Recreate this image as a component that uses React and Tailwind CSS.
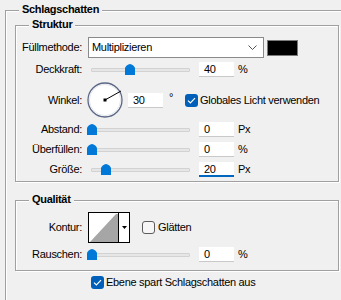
import React from 'react'

function GroupTitle({ children, className }) {
  return (
    <div className={`-mt-[8px] w-fit bg-[#f0f0f0] px-[3px] font-bold leading-[13px] ${className}`}>
      {children}
    </div>
  )
}

function Thumb({ left }) {
  return (
    <svg className="absolute top-[2px]" style={{ left }} width="10" height="11" viewBox="0 0 10 11">
      <path d="M0 11 V4.5 C0 2.5 3 0.3 5 0 C7 0.3 10 2.5 10 4.5 V11 Z" fill="#0078d7" />
    </svg>
  )
}

function Slider({ pos }) {
  // pos = thumb centre, measured from the left of the track
  return (
    <div className="relative w-[99px] h-[15px]">
      <div className="absolute left-0 right-0 top-[6px] h-[4px] bg-[#e6e6e6] border border-[#d2d2d2] rounded-[1px]" />
      <Thumb left={pos - 5} />
    </div>
  )
}

function Field({ value, active }) {
  return (
    <div
      className={`w-[35px] h-[15px] bg-white pl-[5px] leading-[15px] ${
        active ? 'border-b-2 border-[#0067c0]' : 'border-b border-[#c9c9c9]'
      }`}
    >
      {value}
    </div>
  )
}

function Check({ checked }) {
  if (checked) {
    return (
      <span className="w-[13px] h-[13px] rounded-[3px] bg-[#005fb8] flex items-center justify-center shrink-0">
        <svg width="9" height="7" viewBox="0 0 9 7">
          <path d="M1 3.6 L3.4 6 L8 1.2" stroke="white" strokeWidth="1.2" fill="none" />
        </svg>
      </span>
    )
  }
  return <span className="block w-[13px] h-[13px] rounded-[3px] border border-[#5c5c5c] bg-[#f6f6f6] shrink-0" />
}

function SliderRow({ label, pos, value, unit, active, className }) {
  return (
    <div className={`flex items-center h-[15px] ${className}`}>
      <div className="w-[66px] text-right">{label}</div>
      <div className="ml-[9px]">
        <Slider pos={pos} />
      </div>
      <div className="ml-[9px]">
        <Field value={value} active={active} />
      </div>
      <div className="ml-[4px]">{unit}</div>
    </div>
  )
}

function Dial() {
  return (
    <svg width="36" height="36" viewBox="0 0 36 36">
      <circle cx="18" cy="18" r="17" fill="white" stroke="#5b6784" strokeWidth="1.3" />
      <circle cx="18" cy="18" r="15.6" fill="none" stroke="#e4e6ec" strokeWidth="1" />
      <line x1="18" y1="18" x2="34" y2="9" stroke="black" strokeWidth="1" />
      <rect x="16.5" y="16.5" width="3" height="3" fill="black" />
    </svg>
  )
}

function ContourPreview() {
  return (
    <div className="flex w-[42px] h-[31px] border border-black bg-white">
      <svg width="29" height="29" viewBox="0 0 29 29">
        <path d="M1 29 L27 1 L29 1 L29 29 Z" fill="#a6a6a6" />
      </svg>
      <div className="flex-1 border-l border-black flex items-center justify-center">
        <svg width="5" height="3" viewBox="0 0 5 3">
          <path d="M0 0 H5 L2.5 3 Z" fill="black" />
        </svg>
      </div>
    </div>
  )
}

export default function App() {
  return (
    <div className="w-[341px] h-[300px] overflow-hidden bg-[#f0f0f0] font-['Liberation_Sans',Arial,sans-serif] text-[11px] tracking-[-0.3px] text-black">
      <div className="ml-[5px] mt-[10px] w-[400px] h-[320px] border-l border-t border-[#a0a0a0] shadow-[inset_1px_1px_0_#fff] pl-[9px]">
        <GroupTitle className="ml-[4px]">Schlagschatten</GroupTitle>

        {/* Struktur */}
        <div className="mt-[9px] w-[324px] h-[157px] border border-[#a0a0a0] shadow-[inset_1px_1px_0_#fff,1px_1px_0_#fff]">
          <GroupTitle className="ml-[13px]">Struktur</GroupTitle>

          <div className="mt-[6px] flex items-center h-[21px]">
            <div className="w-[66px] text-right">Füllmethode:</div>
            <div className="ml-[6px] w-[176px] h-[21px] bg-white border border-[#8a8a8a] flex items-center justify-between pl-[3px] pr-[6px]">
              <span>Multiplizieren</span>
              <svg width="9" height="5" viewBox="0 0 9 5">
                <path d="M0.5 0.5 L4.5 4.5 L8.5 0.5" stroke="#555" fill="none" strokeWidth="1" />
              </svg>
            </div>
            <div className="ml-[3px] w-[31px] h-[16px] bg-black border border-[#7a7a7a]" />
          </div>

          <SliderRow className="mt-[4px]" label="Deckkraft:" pos={39} value="40" unit="%" />

          <div className="mt-[5px] flex items-center h-[36px]">
            <div className="w-[66px] text-right">Winkel:</div>
            <div className="ml-[5px]">
              <Dial />
            </div>
            <div className="ml-[5px]">
              <Field value="30" />
            </div>
            <div className="w-[22px] pl-[6px] self-start mt-[7px]">°</div>
            <Check checked />
            <span className="ml-[2px]">Globales Licht verwenden</span>
          </div>

          <SliderRow className="mt-[4px]" label="Abstand:" pos={1} value="0" unit="Px" />
          <SliderRow className="mt-[5px]" label="Überfüllen:" pos={1} value="0" unit="%" />
          <SliderRow className="mt-[5px]" label="Größe:" pos={15} value="20" unit="Px" active />
        </div>

        {/* Qualität */}
        <div className="mt-[18px] w-[324px] h-[71px] border border-[#a0a0a0] shadow-[inset_1px_1px_0_#fff,1px_1px_0_#fff]">
          <GroupTitle className="ml-[13px]">Qualität</GroupTitle>

          <div className="mt-[6px] flex items-center">
            <div className="w-[66px] text-right">Kontur:</div>
            <div className="ml-[6px]">
              <ContourPreview />
            </div>
            <div className="ml-[12px]">
              <Check />
            </div>
            <span className="ml-[3px]">Glätten</span>
          </div>

          <SliderRow className="mt-[4px]" label="Rauschen:" pos={1} value="0" unit="%" />
        </div>

        <div className="mt-[5px] ml-[76px] flex items-center h-[13px]">
          <Check checked />
          <span className="ml-[2px]">Ebene spart Schlagschatten aus</span>
        </div>
      </div>
    </div>
  )
}
